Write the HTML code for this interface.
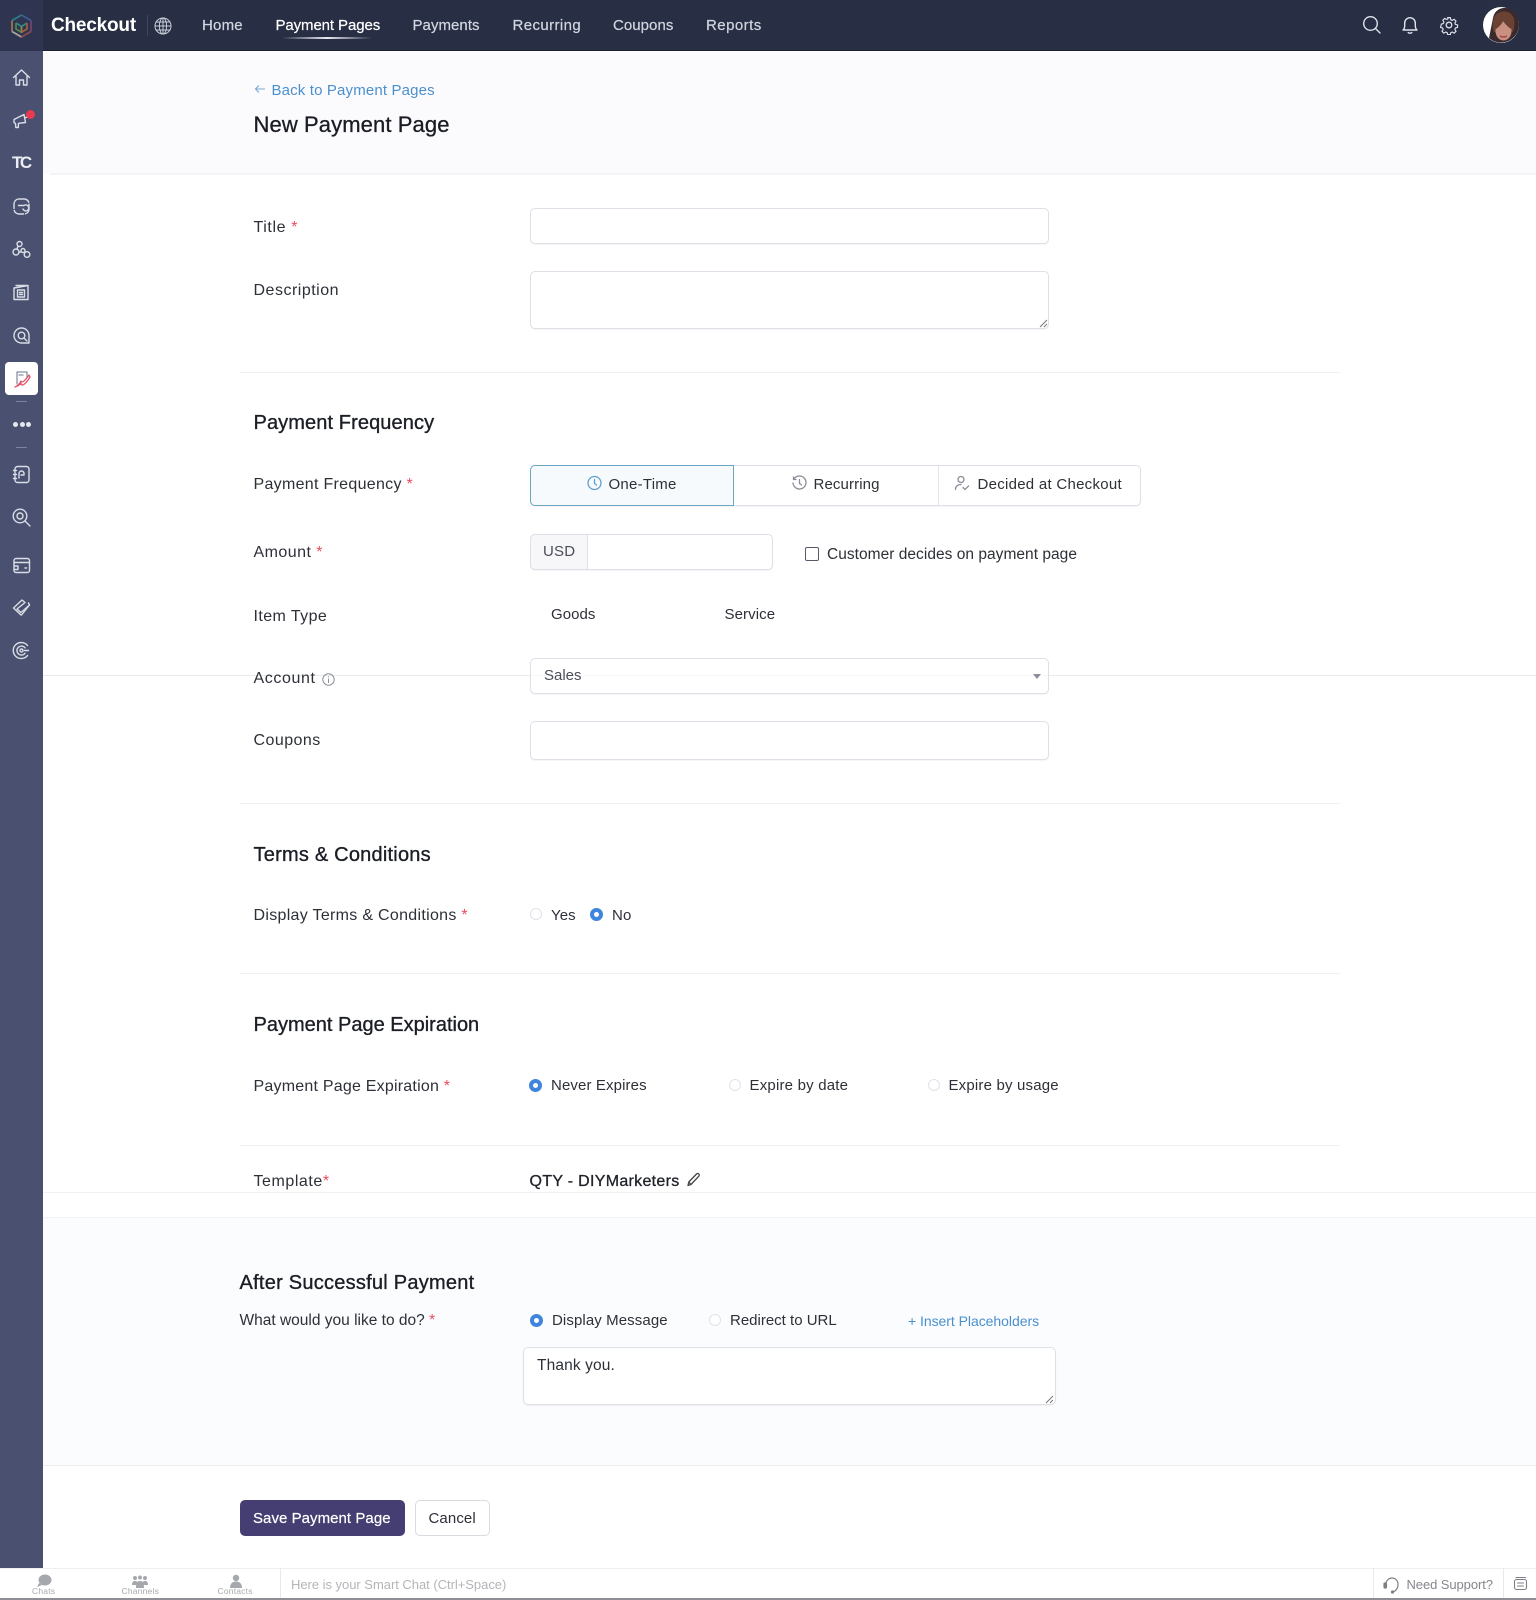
<!DOCTYPE html>
<html><head><meta charset="utf-8"><title>New Payment Page</title>
<style>
*{box-sizing:border-box}
html,body{margin:0;padding:0;width:1536px;height:1600px;overflow:hidden;background:#fff;font-family:"Liberation Sans",Arial,sans-serif}
.a{position:absolute}
.t{position:absolute;white-space:nowrap;line-height:20px;font-size:16px;letter-spacing:.3px;color:#2e3038}
.o{font-size:15px}
.h{font-size:20px;letter-spacing:.1px;color:#1c1e26;-webkit-text-stroke:.35px #1c1e26}
.n{top:16px;font-size:15px;letter-spacing:.05px;color:#d3d6df;-webkit-text-stroke:.2px #d3d6df}
.req{color:#ea4b5f}
.box{position:absolute;background:#fff;border:1px solid #dde0e6;border-radius:5px;box-shadow:0 1px 1px rgba(30,35,60,.05)}
.ln{position:absolute;left:240px;width:1100px;height:1px;background:#f0f1f4}
.r{position:absolute;width:12px;height:12px;border-radius:50%;border:1px solid #dfe2e8;background:#fff}
.r.on{width:13px;height:13px;border:4px solid #3f85de}
.ic{position:absolute;left:11px;width:21px;height:21px;fill:none;stroke:#d9dde6;stroke-width:1.4;stroke-linecap:round;stroke-linejoin:round}
.g{position:absolute;fill:none;stroke:#8a8e99;stroke-width:1.3;stroke-linecap:round;stroke-linejoin:round}
</style></head><body>

<!-- top bar -->
<div class="a" style="left:0;top:0;width:1536px;height:51px;background:#282e44;border-bottom:1px solid #1a1f33"></div>
<div class="a" style="left:0;top:0;width:43px;height:51px;background:#2f3550"></div>
<svg class="a" style="left:9px;top:13px;opacity:.8" width="25" height="26" viewBox="0 0 25 26" fill="none" stroke-width="1.7">
<path d="M12.5 2 22 7.5" stroke="#3c6aa8"/><path d="M12.5 2 3 7.5" stroke="#2f8f9a"/>
<path d="M3 7.5v11" stroke="#b98a5c"/><path d="M3 18.5l9.5 5.5" stroke="#c9c4b8"/>
<path d="M12.5 24 22 18.5" stroke="#a0524f"/><path d="M22 18.5v-11" stroke="#8a4a78"/>
<path d="M7 10l5.5 3.5L18 10" stroke="#2f9d94"/><path d="M12.5 13.5V20" stroke="#b5a23c"/><path d="M7 10v6l5 3" stroke="#5a9d52"/><path d="M18 10v6l-5 3" stroke="#c06a3a"/>
</svg>
<div class="t" style="left:51px;top:16px;font-size:19px;font-weight:bold;letter-spacing:-.2px;color:#fff">Checkout</div>
<div class="a" style="left:147px;top:15px;width:1px;height:21px;background:#3e4560"></div>
<svg class="g" style="left:154px;top:17px;stroke:#c9cdd8;stroke-width:1" width="18" height="18" viewBox="0 0 18 18"><circle cx="9" cy="9" r="8"/><ellipse cx="9" cy="9" rx="3.6" ry="8"/><path d="M1 9h16M2 5h14M2 13h14M9 1v16"/></svg>
<div class="t n" style="left:202px;letter-spacing:.2px">Home</div>
<div class="t n" style="left:275.5px;letter-spacing:-.1px;color:#fff;-webkit-text-stroke:.2px #fff">Payment Pages</div>
<div class="a" style="left:282px;top:37px;width:90px;height:2px;background:linear-gradient(90deg,rgba(255,255,255,0),#e8eaf0 50%,rgba(255,255,255,0))"></div>
<div class="t n" style="left:412.5px">Payments</div>
<div class="t n" style="left:512.5px;letter-spacing:.4px">Recurring</div>
<div class="t n" style="left:613px">Coupons</div>
<div class="t n" style="left:706px;letter-spacing:.45px">Reports</div>

<svg class="g" style="left:1362px;top:15px;stroke:#dfe2ea;stroke-width:1.4" width="20" height="20" viewBox="0 0 20 20"><circle cx="8.5" cy="8.5" r="6.8"/><path d="M13.5 13.5 18 18"/></svg>
<svg class="g" style="left:1400px;top:15px;stroke:#dfe2ea;stroke-width:1.4" width="20" height="20" viewBox="0 0 20 20"><path d="M3 15c1.4-1.2 1.7-2.5 1.7-4.5V8a5.3 5.3 0 0 1 10.6 0v2.5c0 2 .3 3.3 1.700 4.500z"/><path d="M8.2 17.600c1 .8 2.600.8 3.600 0"/></svg>
<svg class="g" style="left:1439px;top:15px;stroke:#dfe2ea;stroke-width:1.3" width="20" height="20" viewBox="0 0 20 20"><circle cx="10" cy="10" r="2.8"/><path d="M8.5 1.8h3l.5 2.400 1.600.7 2.100-1.300 2.100 2.100-1.300 2.100.7 1.600 2.400.5v0l-.2 2.800-2.200.6-.7 1.600 1.300 2.100-2.100 2.100-2.100-1.300-1.600.7-.5 2.100h-3l-.5-2.100-1.600-.7-2.100 1.300-2.100-2.100 1.300-2.100-.7-1.600-2.200-.6L1.500 9l2.200-.6.7-1.600-1.300-2.100 2.100-2.100 2.100 1.300 1.600-.7z" transform="translate(1 1) scale(.9)"/></svg>
<svg class="a" style="left:1483px;top:7px" width="36" height="36" viewBox="0 0 36 36">
<circle cx="18" cy="18" r="18" fill="#fff"/><path d="M6 31A18 18 0 0 0 36 18C36 9 31 2 24 1c-8-1-13 4-14 10z" fill="#3a2a2e"/>
<path d="M11 11C13 3 28 1 31 12c1 5 0 9-1 13H11c-2-5-2-9 0-14z" fill="#6a4234"/>
<ellipse cx="20.500" cy="24" rx="8" ry="9.500" fill="#c98f80"/><path d="M13 22c3-2 6-5 7-8 2 3 5 6 8 8 1-7-2-14-8-14s-9 7-7 14z" fill="#6a4234"/><path d="M17 29c2 1.300 5 1.300 7 0" stroke="#a8454a" stroke-width="1.500" fill="none"/>
</svg>

<!-- sidebar -->
<div class="a" style="left:0;top:51px;width:43px;height:1517px;background:#4a5170"></div>
<svg class="ic" style="top:67px" viewBox="0 0 21 21"><path d="M2.500 10.500 10.500 3l8 7.500M5 9v9h3.500v-5h4v5H16V9"/></svg>
<svg class="ic" style="top:110px" viewBox="0 0 21 21"><path d="M3 9.500 13 4.500l1.500 8-7 .8-.2 4.200H4.800l-.3-4L3 12.500zM14.500 7.500 17 7"/></svg>
<div class="a" style="left:26px;top:110px;width:9px;height:9px;border-radius:50%;background:#ea3a4f"></div>
<div class="t" style="left:12px;top:153px;font-size:17px;font-weight:bold;letter-spacing:-2.500px;color:#eceef3">TC</div>
<svg class="ic" style="top:196px" viewBox="0 0 21 21"><rect x="3" y="3" width="15" height="15" rx="5" stroke-dasharray="11 2"/><path d="M7.500 9.500h5.500a3 3 0 1 1-1 3.500"/></svg>
<svg class="ic" style="top:239px" viewBox="0 0 21 21"><circle cx="8.500" cy="5" r="2.500"/><circle cx="5" cy="13" r="3"/><circle cx="12" cy="11.500" r="2"/><circle cx="16" cy="15.500" r="2.800"/><path d="M7 7 6 10M8 13h2"/></svg>
<svg class="ic" style="top:282px" viewBox="0 0 21 21"><path d="M3 6v11.500h14V6M3 6l14-2.500V6M5 3.500h11"/><rect x="6.500" y="8" width="7" height="7"/><path d="M8.500 10.500h3M8.500 12.500h3"/></svg>
<svg class="ic" style="top:325px" viewBox="0 0 21 21"><path d="M18 18h-7.500a7.500 7.500 0 1 1 7.500-7.500z"/><circle cx="10.500" cy="10.500" r="3.300"/><path d="M13 13l3 3"/></svg>
<div class="a" style="left:5px;top:362px;width:33px;height:33px;background:#fff;border-radius:4px"></div>
<svg class="a" style="left:12px;top:369px" width="20" height="20" viewBox="0 0 20 20" fill="none" stroke-width="1.300" stroke-linecap="round" stroke-linejoin="round"><path d="M5 15V3h10v5" stroke="#8a8fa3"/><path d="M7 6h4" stroke="#8a8fa3"/><path d="M3 18c3-1 5-4 6-6 1 2 3 1 8-6l1 2c-3 5-6 8-8 8-1 0-1-1-1-2-1 2-3 3-6 4z" stroke="#e0566a"/></svg>
<div class="a" style="left:16px;top:401px;width:11px;height:1px;background:#7d849d"></div>
<div class="a" style="left:13px;top:422px;width:5px;height:5px;border-radius:50%;background:#e6e8ee"></div>
<div class="a" style="left:19.500px;top:422px;width:5px;height:5px;border-radius:50%;background:#e6e8ee"></div>
<div class="a" style="left:26px;top:422px;width:5px;height:5px;border-radius:50%;background:#e6e8ee"></div>
<div class="a" style="left:16px;top:447px;width:11px;height:1px;background:#7d849d"></div>
<svg class="ic" style="top:464px" viewBox="0 0 21 21"><rect x="4" y="2.500" width="14" height="16" rx="2.500"/><path d="M8 14V9.500a2.500 2.500 0 0 1 5 0V11h-3M2.500 6.500h3M2.500 10.500h3M2.500 14.500h3"/></svg>
<svg class="ic" style="top:507px" viewBox="0 0 21 21"><circle cx="9" cy="9" r="6.800"/><circle cx="9" cy="9" r="3"/><path d="M14 14l5 5"/></svg>
<svg class="ic" style="top:555px" viewBox="0 0 21 21"><rect x="3" y="3.500" width="15.500" height="14" rx="2"/><path d="M3 7.500h15.500M3 11h4v3.500H3M14 13h1.500"/></svg>
<svg class="ic" style="top:597px" viewBox="0 0 21 21"><path d="M2.500 11 11 3l3 2.500L6 12l4 3.500L18.500 8l-1-2M10 18l-7.500-7"/><path d="M18.500 8 10.500 18"/></svg>
<svg class="ic" style="top:640px" viewBox="0 0 21 21"><path d="M16.500 5.500a8 8 0 1 0 0 10"/><path d="M14 7.800a4.500 4.500 0 1 0 0 5.500"/><circle cx="10.500" cy="10.500" r="1.500"/><path d="M17.500 10.500h-4"/></svg>

<!-- header band -->
<div class="a" style="left:43px;top:52px;width:1493px;height:122px;background:#fbfbfe"></div>
<div class="a" style="left:50px;top:173px;width:1486px;height:2px;background:#f4f4f8"></div>
<svg class="a" style="left:254px;top:84px" width="12" height="10" viewBox="0 0 12 10" fill="none" stroke="#7aa9d4" stroke-width="1.100"><path d="M11 5H1.500M5 1.500 1.500 5 5 8.500"/></svg>
<div class="t" style="left:271.500px;top:81px;font-size:15px;letter-spacing:.15px;color:#4a90cd">Back to Payment Pages</div>
<div class="t" style="left:253.500px;top:115px;line-height:20px;font-size:22px;letter-spacing:.1px;color:#1a1c24;-webkit-text-stroke:.3px #1a1c24">New Payment Page</div>

<!-- basic -->
<div class="t" style="left:253.500px;top:218px;letter-spacing:.6px">Title <span class="req">*</span></div>
<div class="box" style="left:530px;top:208px;width:519px;height:36px"></div>
<div class="t" style="left:253.500px;top:281px;letter-spacing:.5px">Description</div>
<div class="box" style="left:530px;top:271px;width:519px;height:58px"></div>
<svg class="a" style="left:1039px;top:319px" width="9" height="9" viewBox="0 0 9 9" stroke="#777" stroke-width="1"><path d="M8 1 1 8M8 5 5 8"/></svg>
<div class="ln" style="top:372px"></div>

<div class="t h" style="left:253.500px;top:413px">Payment Frequency</div>
<div class="t" style="left:253.500px;top:475px">Payment Frequency <span class="req">*</span></div>
<div class="box" style="left:530px;top:465px;width:611px;height:41px"></div>
<div class="a" style="left:530px;top:465px;width:204px;height:41px;background:#f6fafc;border:1px solid #6aa6c4;border-radius:5px 0 0 5px"></div>
<div class="a" style="left:938px;top:465px;width:1px;height:41px;background:#e2e4e9"></div>
<svg class="g" style="left:587px;top:475px;stroke:#5fa0cf" width="15" height="16" viewBox="0 0 15 16"><circle cx="7.500" cy="8" r="6.500"/><path d="M7.500 4.500V8.500l2 1.500"/></svg>
<div class="t o" style="left:608.500px;top:475px;letter-spacing:.25px">One-Time</div>
<svg class="g" style="left:792px;top:475px" width="15" height="16" viewBox="0 0 15 16"><path d="M2 4a6.500 6.500 0 1 1-1 4M1.500 2v2.500H4"/><path d="M7.500 4.500V8.500l2 1.500"/></svg>
<div class="t o" style="left:813.500px;top:475px;letter-spacing:.12px">Recurring</div>
<svg class="g" style="left:954px;top:475px" width="16" height="16" viewBox="0 0 16 16"><circle cx="7" cy="4.500" r="3"/><path d="M1.500 14.500c0-3 2.200-5 5.500-5M9 12.500l2 2 3.500-3.500"/></svg>
<div class="t o" style="left:977.500px;top:475px;letter-spacing:.27px">Decided at Checkout</div>

<div class="t" style="left:253.500px;top:543px;letter-spacing:.45px">Amount <span class="req">*</span></div>
<div class="box" style="left:530px;top:534px;width:243px;height:36px"></div>
<div class="a" style="left:530px;top:534px;width:58px;height:36px;background:#f7f7f9;border:1px solid #dde0e6;border-radius:5px 0 0 5px"></div>
<div class="t" style="left:543px;top:541.500px;font-size:15px;letter-spacing:.2px;color:#4b4e58">USD</div>
<div class="a" style="left:805px;top:547px;width:14px;height:14px;background:#fff;border:1.300px solid #555a66;border-radius:2px"></div>
<div class="t" style="left:827px;top:544.500px;font-size:15.500px;letter-spacing:.03px">Customer decides on payment page</div>

<div class="t" style="left:253.500px;top:606.500px;letter-spacing:.42px">Item Type</div>
<div class="t o" style="left:551px;top:605px;letter-spacing:.05px">Goods</div>
<div class="t o" style="left:724.500px;top:605px;letter-spacing:.1px">Service</div>

<div class="a" style="left:43px;top:675px;width:1493px;height:1px;background:#e9eaee"></div>
<div class="t" style="left:253.500px;top:669px;letter-spacing:.6px">Account</div>
<svg class="g" style="left:322px;top:673px;stroke-width:1" width="13" height="13" viewBox="0 0 13 13"><circle cx="6.500" cy="6.500" r="5.700"/><path d="M6.500 6v3.500M6.500 3.700v.3"/></svg>
<div class="box" style="left:530px;top:658px;width:519px;height:36px;background:rgba(255,255,255,.6)"></div>
<div class="t" style="left:544px;top:666px;font-size:15px;letter-spacing:0;color:#4b4e58">Sales</div>
<div class="a" style="left:1033px;top:674px;width:0;height:0;border-left:4.500px solid transparent;border-right:4.500px solid transparent;border-top:5px solid #8a8e99"></div>

<div class="t" style="left:253.500px;top:731px;letter-spacing:.45px">Coupons</div>
<div class="box" style="left:530px;top:721px;width:519px;height:39px"></div>
<div class="ln" style="top:803px"></div>

<!-- terms -->
<div class="t h" style="left:253.500px;top:845px;letter-spacing:.22px">Terms &amp; Conditions</div>
<div class="t" style="left:253.500px;top:906px">Display Terms &amp; Conditions <span class="req">*</span></div>
<div class="r" style="left:530px;top:908px"></div>
<div class="t o" style="left:551px;top:905.500px;letter-spacing:.1px">Yes</div>
<div class="r on" style="left:590px;top:908px"></div>
<div class="t o" style="left:612px;top:905.500px;letter-spacing:.2px">No</div>
<div class="ln" style="top:973px"></div>

<!-- expiration -->
<div class="t h" style="left:253.500px;top:1014.500px;letter-spacing:0">Payment Page Expiration</div>
<div class="t" style="left:253.500px;top:1077px;letter-spacing:.22px">Payment Page Expiration <span class="req">*</span></div>
<div class="r on" style="left:529px;top:1078.500px"></div>
<div class="t o" style="left:551px;top:1076px;letter-spacing:.12px">Never Expires</div>
<div class="r" style="left:729px;top:1079px"></div>
<div class="t o" style="left:749.500px;top:1076px;letter-spacing:.2px">Expire by date</div>
<div class="r" style="left:928px;top:1079px"></div>
<div class="t o" style="left:948.500px;top:1076px;letter-spacing:.18px">Expire by usage</div>
<div class="ln" style="top:1145px"></div>

<!-- template -->
<div class="t" style="left:253.500px;top:1171.500px;letter-spacing:.55px">Template<span class="req">*</span></div>
<div class="t" style="left:529.500px;top:1171.500px;letter-spacing:.3px;color:#1f2128;-webkit-text-stroke:.3px #1f2128">QTY - DIYMarketers</div>
<svg class="g" style="left:686px;top:1172px;stroke:#444" width="15" height="15" viewBox="0 0 15 15"><path d="M2 13.500 2.800 10 10.500 2a1.500 1.500 0 0 1 2.300 2.200L5 12.500zM2.800 10 5 12.500"/></svg>
<div class="a" style="left:43px;top:1192px;width:1493px;height:1px;background:#f1f2f5"></div>

<!-- after band -->
<div class="a" style="left:43px;top:1217px;width:1493px;height:249px;background:#fbfcfe;border-top:1px solid #f1f2f6;border-bottom:1px solid #eceef1"></div>
<div class="t h" style="left:239.500px;top:1273px;letter-spacing:.25px">After Successful Payment</div>
<div class="t" style="left:239.500px;top:1311px;font-size:15.500px;letter-spacing:0">What would you like to do? <span class="req">*</span></div>
<div class="r on" style="left:530px;top:1313.500px"></div>
<div class="t o" style="left:552px;top:1311px;letter-spacing:.1px">Display Message</div>
<div class="r" style="left:708.500px;top:1314px"></div>
<div class="t o" style="left:730px;top:1311px;letter-spacing:0">Redirect to URL</div>
<div class="t" style="left:908px;top:1311px;font-size:14px;letter-spacing:-.04px;color:#4a90cd">+ Insert Placeholders</div>
<div class="box" style="left:523px;top:1347px;width:532.500px;height:58px"></div>
<div class="t" style="left:537px;top:1356px;font-size:15.500px;letter-spacing:.13px">Thank you.</div>
<svg class="a" style="left:1045px;top:1395px" width="9" height="9" viewBox="0 0 9 9" stroke="#777" stroke-width="1"><path d="M8 1 1 8M8 5 5 8"/></svg>

<!-- buttons -->
<div class="a" style="left:239.500px;top:1499.500px;width:165px;height:36.500px;background:#453e72;border-radius:5px"></div>
<div class="t o" style="left:253px;top:1508.500px;letter-spacing:.05px;color:#fff;-webkit-text-stroke:.2px #fff">Save Payment Page</div>
<div class="a" style="left:415px;top:1499.500px;width:74.500px;height:36.500px;background:#fff;border:1px solid #d9dbe1;border-radius:5px"></div>
<div class="t o" style="left:428.500px;top:1508.500px;letter-spacing:.1px">Cancel</div>

<!-- bottom bar -->
<div class="a" style="left:0;top:1568px;width:1536px;height:32px;background:#fff;border-top:1px solid #eeeff1;border-bottom:2px solid #8d8f94"></div>
<div class="a" style="left:280px;top:1568px;width:1px;height:30px;background:#e8e9ec"></div>
<div class="a" style="left:1373px;top:1568px;width:1px;height:30px;background:#e8e9ec"></div>
<div class="a" style="left:1503px;top:1568px;width:1px;height:30px;background:#e8e9ec"></div>
<svg class="a" style="left:36px;top:1574px" width="16" height="14" viewBox="0 0 16 14"><ellipse cx="9" cy="6" rx="6.500" ry="5.500" fill="#a5a8ad"/><path d="M3 9 1 13l5-2z" fill="#a5a8ad"/></svg>
<svg class="a" style="left:132px;top:1575px" width="16" height="13" viewBox="0 0 16 13" fill="#a5a8ad"><circle cx="3" cy="3" r="2"/><circle cx="8" cy="2.500" r="2"/><circle cx="13" cy="3" r="2"/><path d="M0 10c0-3 1-4 3-4s3 1 3 4zM4 13c0-5 1-7 4-7s4 2 4 7zM10 10c0-3 1-4 3-4s3 1 3 4z"/></svg>
<svg class="a" style="left:229px;top:1574px" width="14" height="14" viewBox="0 0 14 14" fill="#a5a8ad"><circle cx="7" cy="4" r="3.200"/><path d="M1 14c0-4 2-6.500 6-6.500S13 10 13 14z"/></svg>
<div class="t" style="left:32px;top:1584.500px;font-size:8.500px;letter-spacing:.2px;color:#a8aaae;line-height:12px">Chats</div>
<div class="t" style="left:121.500px;top:1584.500px;font-size:8.500px;letter-spacing:.2px;color:#a8aaae;line-height:12px">Channels</div>
<div class="t" style="left:217.500px;top:1584.500px;font-size:8.500px;letter-spacing:.2px;color:#a8aaae;line-height:12px">Contacts</div>
<div class="t" style="left:291px;top:1574.500px;font-size:13px;letter-spacing:-.03px;color:#b3b5b9">Here is your Smart Chat (Ctrl+Space)</div>
<svg class="a" style="left:1383px;top:1576px" width="18" height="18" viewBox="0 0 18 18" fill="none" stroke="#7d7f85" stroke-width="1.200"><path d="M3 9V8a6 6 0 0 1 12 0v1c0 3-2 6-5 7"/><rect x="1" y="7" width="2.500" height="5" rx="1" fill="#7d7f85"/><circle cx="9.500" cy="16" r="1" fill="#7d7f85"/></svg>
<div class="t" style="left:1406.500px;top:1574.500px;font-size:13px;letter-spacing:-.08px;color:#85878c">Need Support?</div>
<svg class="g" style="left:1513px;top:1576px;stroke:#7d7f85;stroke-width:1.100" width="15" height="15" viewBox="0 0 15 15"><rect x="1.500" y="3.500" width="12" height="10" rx="2"/><path d="M3 1.500h9.500M4.500 7h6M4.500 10h6"/></svg>
</body></html>
